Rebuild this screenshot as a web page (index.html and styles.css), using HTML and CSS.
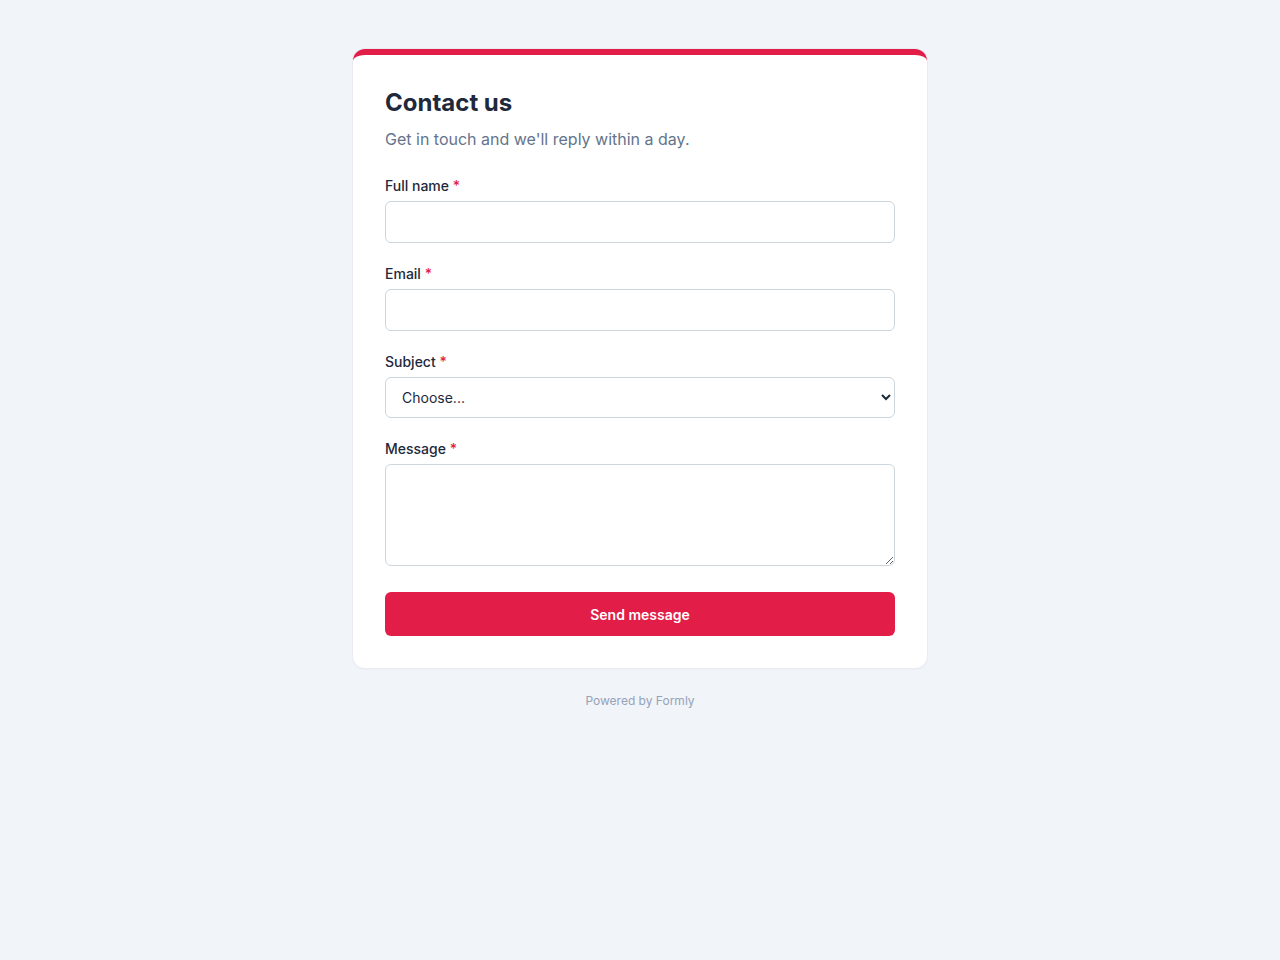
FILE: index.html
```html
<!DOCTYPE html>
<html lang="en">
<head>
<meta charset="utf-8">
<title>Contact us</title>
<link rel="stylesheet" href="styles.css">
</head>
<body>
<main class="page">
  <form class="card">
    <h1 class="title">Contact us</h1>
    <p class="subtitle">Get in touch and we'll reply within a day.</p>
    <div class="field">
      <label class="label" for="name">Full name <span class="req">*</span></label>
      <input class="control" id="name" type="text">
    </div>
    <div class="field">
      <label class="label" for="email">Email <span class="req">*</span></label>
      <input class="control" id="email" type="email">
    </div>
    <div class="field">
      <label class="label" for="subject">Subject <span class="req">*</span></label>
      <select class="control select" id="subject">
        <option>Choose...</option>
      </select>
    </div>
    <div class="field field-last">
      <label class="label" for="message">Message <span class="req">*</span></label>
      <textarea class="control textarea" id="message"></textarea>
    </div>
    <button class="submit" type="button">Send message</button>
  </form>
  <p class="footer">Powered by Formly</p>
</main>
</body>
</html>
```
FILE: styles.css
```css
* { box-sizing: border-box; }
html, body { margin: 0; padding: 0; }
body {
  background: #f1f4f8;
  font-family: Inter, "Noto Sans", "Liberation Sans", sans-serif;
  color: #1e293b;
}
.page {
  display: flex;
  flex-direction: column;
  align-items: center;
  padding-top: 49px;
}
.card {
  width: 574px;
  background: #fff;
  border-top: 6px solid #e11d48;
  border-radius: 12px;
  padding: 32px;
  box-shadow: 0 0 0 1px #e8ecf2, 0 1px 3px rgba(15, 23, 42, 0.05);
}
.title {
  margin: 0;
  font-size: 24px;
  line-height: 32px;
  font-weight: 700;
  color: #1e293b;
}
.subtitle {
  margin: 8px 0 25px;
  font-size: 16px;
  line-height: 24px;
  color: #64748b;
}
.field {
  display: flex;
  flex-direction: column;
  margin-bottom: 21px;
}
.field-last { margin-bottom: 26px; }
.label {
  font-size: 14px;
  line-height: 20px;
  font-weight: 500;
  color: #1e293b;
  margin-bottom: 5px;
}
.req { color: #e11d48; }
.control {
  display: block;
  width: 100%;
  height: 42px;
  border: 1px solid #ccd6dc;
  border-radius: 6px;
  background: #fff;
  font-family: inherit;
  font-size: 14px;
  color: #1e293b;
  padding: 0 12px;
}
.select {
  height: 41px;
}
.textarea {
  height: 102px;
  resize: vertical;
  padding: 10px 12px;
}
.submit {
  display: block;
  width: 100%;
  height: 44px;
  border: none;
  border-radius: 6px;
  background: #e11d48;
  color: #fff;
  font-family: inherit;
  font-size: 14px;
  font-weight: 600;
  cursor: pointer;
}
.footer {
  margin: 25px 0 0;
  font-size: 12px;
  line-height: 16px;
  color: #94a3b8;
}
```
